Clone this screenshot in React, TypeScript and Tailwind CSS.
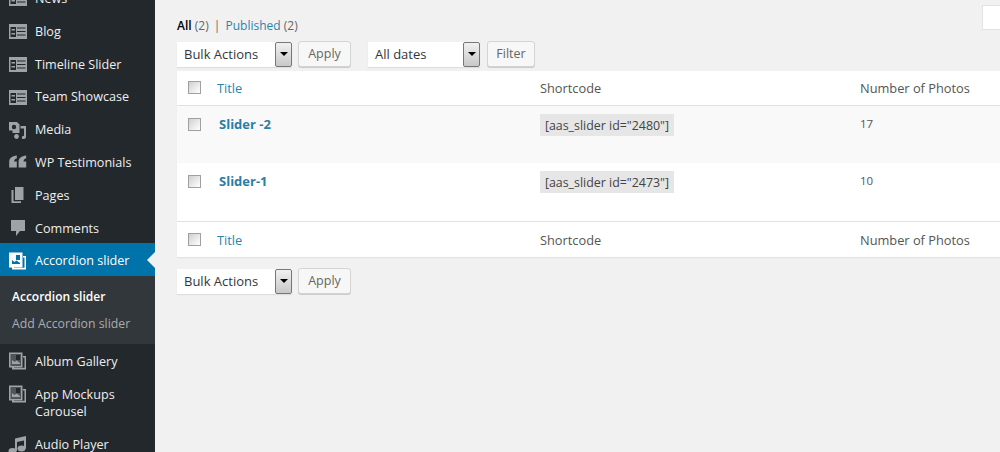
import type { ReactNode } from 'react'

type IconKind = 'list' | 'media' | 'quote' | 'pages' | 'comment' | 'gallery' | 'music'

function MenuIcon({ kind, active }: { kind: IconKind; active?: boolean }) {
  const fill = active ? '#ffffff' : '#9ea3a8'
  const hole = active ? '#0073aa' : '#23282d'
  return (
    <svg width="20" height="20" viewBox="0 0 20 20" className="shrink-0">
      {kind === 'list' && (
        <>
          <rect x="1" y="3" width="18" height="15" fill={fill} />
          <rect x="2.500" y="6" width="5.500" height="10" fill={hole} />
          <rect x="3.500" y="8" width="3.500" height="1.500" fill={fill} />
          <rect x="3.500" y="12" width="3.500" height="1.500" fill={fill} />
          <rect x="9" y="6.500" width="8.500" height="1" fill={hole} />
          <rect x="9" y="10" width="8.500" height="1" fill={hole} />
          <rect x="9" y="13.500" width="8.500" height="1" fill={hole} />
        </>
      )}
      {kind === 'media' && (
        <>
          <path d="M1 2h8l2.500 2.500V13H1z" fill={fill} />
          <circle cx="6" cy="7" r="2.200" fill={hole} />
          <rect x="1" y="10.500" width="3.500" height="2.500" fill={hole} />
          <path d="M12.500 6H18v11c0 1.300-1 2-2.300 2-1.100 0-1.900-.7-1.900-1.600s1-1.700 2.200-1.700V8.500h-3.500z" fill={fill} />
          <circle cx="8.500" cy="16.500" r="2.400" fill={fill} />
        </>
      )}
      {kind === 'quote' && (
        <path
          d="M8.800 3.500v2.800C7 7 6.100 8 6.100 9.500h2.700v6H1.200V9.800c0-3.600 2.900-5.900 7.600-6.300zm9.400 0v2.800c-1.800.7-2.700 1.700-2.700 3.200h2.700v6h-7.600V9.800c0-3.600 2.900-5.900 7.600-6.300z"
          fill={fill}
        />
      )}
      {kind === 'pages' && (
        <>
          <path d="M7 2h8.500v13H7z" fill={fill} />
          <path d="M3.500 5h2v11.200H13V18H3.500z" fill={fill} />
        </>
      )}
      {kind === 'comment' && <path d="M3 2h14v11h-5l-4 5v-5H3z" fill={fill} />}
      {kind === 'gallery' && (
        <>
          <path d="M15 5h3v13.500H4V16h2v.800h10.500V6.500H15z" fill={fill} />
          <path d="M1 1.500h13.500v15H1z" fill={fill} />
          <rect x="2.500" y="3" width="10.500" height="12" fill={active ? '#ffffff' : '#50555a'} />
          <rect x="8" y="4" width="4" height="5" fill={hole} />
          <path d="M4 13V9l2.500 2 2-1.500L12 12v1z" fill={active ? '#0073aa' : '#9ea3a8'} />
        </>
      )}
      {kind === 'music' && (
        <>
          <path d="M7 3.500 18 1v12.500h-2V5.500l-7 1.600V16H7z" fill={fill} />
          <ellipse cx="4.500" cy="16" rx="4" ry="3" fill={fill} />
          <ellipse cx="13.500" cy="13.500" rx="4" ry="3" fill={fill} />
        </>
      )}
    </svg>
  )
}

function MenuRow({ kind, label }: { kind: IconKind; label: ReactNode }) {
  return (
    <div className="flex h-[32.8px] items-center pl-[8px] pt-[2px] text-[12.6px] text-[#eeeeee]">
      <MenuIcon kind={kind} />
      <span className="ml-[7px] mt-[2px]">{label}</span>
    </div>
  )
}

function Sidebar() {
  return (
    <aside className="-mt-[19px] w-[155px] shrink-0 self-stretch bg-[#23282d]">
      <MenuRow kind="list" label="News" />
      <MenuRow kind="list" label="Blog" />
      <MenuRow kind="list" label="Timeline Slider" />
      <MenuRow kind="list" label="Team Showcase" />
      <MenuRow kind="media" label="Media" />
      <MenuRow kind="quote" label="WP Testimonials" />
      <MenuRow kind="pages" label="Pages" />
      <MenuRow kind="comment" label="Comments" />
      <div className="relative flex h-[33px] items-center bg-[#0073aa] pl-[8px] pt-[2px] text-[12.6px] text-white">
        <MenuIcon kind="gallery" active />
        <span className="ml-[7px] mt-[2px]">Accordion slider</span>
        <span className="absolute right-0 top-[9px] h-0 w-0 border-y-[8px] border-r-[8px] border-y-transparent border-r-[#f1f1f1]" />
      </div>
      <div className="flex h-[68px] flex-col bg-[#32373c] pl-[12px] pt-[12px]">
        <span className="text-[12px] font-semibold leading-[18px] text-white">Accordion slider</span>
        <span className="mt-[9px] text-[12.3px] leading-[18px] text-[#a9acb0]">Add Accordion slider</span>
      </div>
      <div className="flex h-[34px] items-center pl-[8px] text-[12.6px] text-[#eeeeee]">
        <MenuIcon kind="gallery" />
        <span className="ml-[7px] mt-[2px]">Album Gallery</span>
      </div>
      <div className="flex h-[49px] items-start pl-[8px] pt-[6px] text-[12.6px] leading-[17px] text-[#eeeeee]">
        <MenuIcon kind="gallery" />
        <span className="ml-[7px] mt-[2px] w-[100px]">App Mockups Carousel</span>
      </div>
      <MenuRow kind="music" label="Audio Player" />
    </aside>
  )
}

function Dropdown({ label, width }: { label: string; width: string }) {
  return (
    <div className={`flex h-[25px] items-center justify-between bg-white pl-[7px] text-[13px] text-[#32373c] shadow-[0_1px_1px_rgba(0,0,0,0.08)] ${width}`}>
      <span className="mt-[2px]">{label}</span>
      <span className="flex h-[25px] w-[17px] items-center justify-center rounded-[2px] border border-[#777777] bg-gradient-to-b from-[#f1f1f1] to-[#c8c8c8]">
        <span className="h-0 w-0 border-x-[4px] border-t-[4px] border-x-transparent border-t-black" />
      </span>
    </div>
  )
}

function Btn({ label, width }: { label: string; width: string }) {
  return (
    <div className={`flex h-[26px] items-center justify-center rounded-[3px] border border-[#d4d4d4] bg-[#f7f7f7] pt-[1px] text-[12.5px] text-[#666666] shadow-[0_1px_0_#cccccc] ${width}`}>
      {label}
    </div>
  )
}

function Check() {
  return <span className="block h-[13px] w-[13px] border border-[#a0a0a0] bg-gradient-to-br from-[#d0d0d0] to-[#ffffff]" />
}

function HeadRow({ border, height, inset }: { border: string; height: string; inset: string }) {
  return (
    <tr className={`bg-white text-[12.8px] ${border} ${height}`}>
      <td className="pl-[11px] align-middle">
        <Check />
      </td>
      <td className={`pl-[4px] text-[#2a85ad] ${inset}`}>Title</td>
      <td className={`text-[#555555] ${inset}`}>Shortcode</td>
      <td className={`text-[#555555] ${inset}`}>Number of Photos</td>
    </tr>
  )
}

function SliderRow({ title, code, photos, shade }: { title: string; code: string; photos: string; shade?: boolean }) {
  return (
    <tr className={`h-[58px] ${shade ? 'bg-[#f9f9f9]' : 'bg-white'}`}>
      <td className="pl-[11px] pt-[12px] align-top">
        <Check />
      </td>
      <td className="pl-[6px] pt-[8px] align-top text-[13px] font-bold leading-[20px] text-[#2a7ea6]">{title}</td>
      <td className="pt-[8px] align-top">
        <code className="inline-block h-[22px] w-[134px] bg-[#e6e6e6] text-center font-['Open_Sans',sans-serif] text-[12.4px] leading-[24px] text-[#444444]">
          {code}
        </code>
      </td>
      <td className="pt-[8px] align-top text-[11.5px] leading-[20px] text-[#555555]">{photos}</td>
    </tr>
  )
}

export default function App() {
  return (
    <div className="flex h-[452px] w-[1000px] overflow-hidden bg-[#f1f1f1] font-['Open_Sans',sans-serif] text-[13px]">
      <Sidebar />
      <main className="relative min-w-0 flex-1 pl-[22px] pt-[16px]">
        <div className="absolute right-0 top-[5px] h-[25px] w-[18px] border border-r-0 border-[#e2e2e2] bg-white" />

        <p className="h-[20px] text-[12px] leading-[20px] text-[#666666]">
          <b className="font-semibold text-black">All</b> (2) <span className="mx-[2px]">|</span>{' '}
          <span className="text-[#2a85ad]">Published</span> (2)
        </p>

        <div className="mt-[5px] flex items-center">
          <Dropdown label="Bulk Actions" width="w-[115px]" />
          <div className="ml-[6px]">
            <Btn label="Apply" width="w-[53px]" />
          </div>
          <div className="ml-[17px]">
            <Dropdown label="All dates" width="w-[112px]" />
          </div>
          <div className="ml-[7px]">
            <Btn label="Filter" width="w-[48px]" />
          </div>
        </div>

        <table className="mt-[4px] w-[850px] table-fixed border-collapse shadow-[0_1px_1px_rgba(0,0,0,0.06)]">
          <colgroup>
            <col className="w-[36px]" />
            <col className="w-[327px]" />
            <col className="w-[320px]" />
            <col />
          </colgroup>
          <tbody>
            <HeadRow border="border-b border-[#e1e1e1]" height="h-[34px]" inset="pt-[1px]" />
            <SliderRow title="Slider -2" code={'[aas_slider id="2480"]'} photos="17" shade />
            <SliderRow title="Slider-1" code={'[aas_slider id="2473"]'} photos="10" />
            <HeadRow border="border-t border-[#e1e1e1]" height="h-[36px]" inset="pt-[3px]" />
          </tbody>
        </table>

        <div className="mt-[11px] flex items-center">
          <Dropdown label="Bulk Actions" width="w-[115px]" />
          <div className="ml-[6px]">
            <Btn label="Apply" width="w-[53px]" />
          </div>
        </div>
      </main>
    </div>
  )
}
